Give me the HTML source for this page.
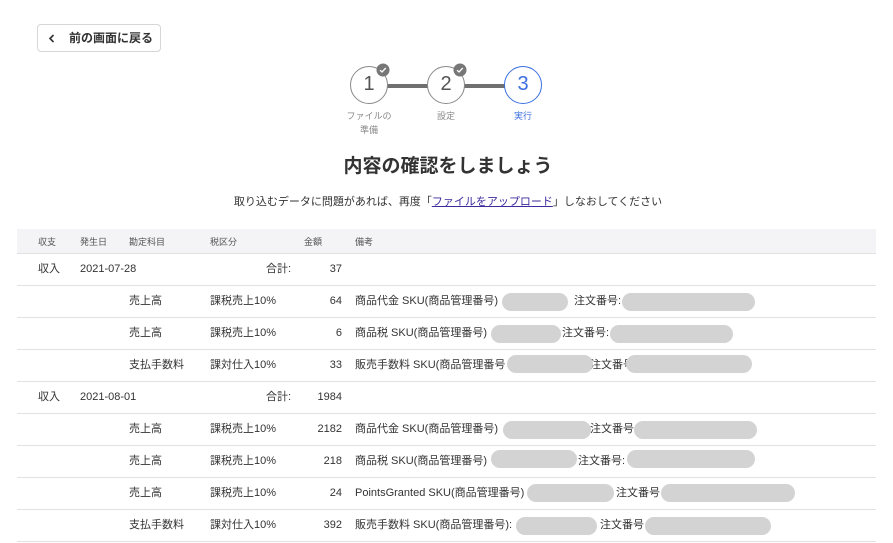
<!DOCTYPE html>
<html><head><meta charset="utf-8"><style>
*{margin:0;padding:0;box-sizing:border-box}
body{width:893px;height:543px;background:#fff;font-family:"Liberation Sans","Noto Sans CJK JP",sans-serif;color:#333;position:relative;overflow:hidden}
.a{position:absolute;white-space:nowrap}
.btn{left:37px;top:24px;width:124px;height:28px;border:1px solid #d6d6d6;border-radius:4px;font-size:12px;font-weight:bold;line-height:26px;padding-left:31px;color:#333}
.circ{position:absolute;width:38px;height:38px;border-radius:50%;border:1.5px solid #8a8a8a;background:#fff;font-size:20px;line-height:35px;text-align:center;color:#555;top:66px}
.lbl{position:absolute;font-size:9px;color:#888;text-align:center;line-height:14px;width:60px}
.t{font-size:11px;color:#333;line-height:14px}
.line{position:absolute;left:17px;width:859px;height:1px;background:#e2e2e2}
.pill{position:absolute;height:18px;border-radius:9px;background:#d3d3d4}
.r{text-align:right}
</style></head><body>
<div class="a btn">前の画面に戻る</div>
<svg class="a" style="left:48px;top:34px" width="8" height="9"><path d="M5.5 1 L2 4.5 L5.5 8" stroke="#333" stroke-width="1.6" fill="none"/></svg>

<div style="position:absolute;left:385px;top:84px;width:140px;height:4px;background:#707070"></div>
<div class="circ" style="left:350px">1</div>
<div class="circ" style="left:427px">2</div>
<div class="circ" style="left:504px;border-color:#3b6fe0;color:#3b6fe0">3</div>
<svg class="a" style="left:376px;top:63px" width="14" height="14"><circle cx="7" cy="7" r="6.5" fill="#777"/><path d="M4 7.2 L6 9 L9.8 5" stroke="#fff" stroke-width="1.3" fill="none"/></svg>
<svg class="a" style="left:453px;top:63px" width="14" height="14"><circle cx="7" cy="7" r="6.5" fill="#777"/><path d="M4 7.2 L6 9 L9.8 5" stroke="#fff" stroke-width="1.3" fill="none"/></svg>
<div class="lbl" style="left:339px;top:109px">ファイルの<br>準備</div>
<div class="lbl" style="left:416px;top:109px">設定</div>
<div class="lbl" style="left:493px;top:109px;color:#3b6fe0">実行</div>

<div class="a" style="left:0;width:893px;text-align:center;top:151px;font-size:19px;font-weight:bold;color:#333;padding-left:3px">内容の確認をしましょう</div>
<div class="a" style="left:0;width:893px;text-align:center;top:193px;font-size:11px;color:#333;padding-left:3px">取り込むデータに問題があれば、再度「<span style="color:#3d2a9e;text-decoration:underline">ファイルをアップロード</span>」しなおしてください</div>

<div style="position:absolute;left:17px;top:229px;width:859px;height:25px;background:#f4f3f5"></div>
<div class="a" style="top:235px;left:38px;font-size:9px;color:#555">収支</div>
<div class="a" style="top:235px;left:80px;font-size:9px;color:#555">発生日</div>
<div class="a" style="top:235px;left:129px;font-size:9px;color:#555">勘定科目</div>
<div class="a" style="top:235px;left:210px;font-size:9px;color:#555">税区分</div>
<div class="a" style="top:235px;left:304px;font-size:9px;color:#555">金額</div>
<div class="a" style="top:235px;left:355px;font-size:9px;color:#555">備考</div>
<div class="line" style="top:253px"></div>

<div class="line" style="top:285px"></div><div class="line" style="top:317px"></div><div class="line" style="top:349px"></div><div class="line" style="top:381px"></div><div class="line" style="top:413px"></div><div class="line" style="top:445px"></div><div class="line" style="top:477px"></div><div class="line" style="top:509px"></div><div class="line" style="top:541px"></div>

<div class="a t" style="top:262px;left:38px">収入</div>
<div class="a t" style="top:262px;left:80px">2021-07-28</div>
<div class="a t" style="top:262px;left:266px">合計:</div>
<div class="a t r" style="top:262px;left:300px;width:42px">37</div>

<div class="a t" style="top:294px;left:129px">売上高</div><div class="a t" style="top:294px;left:210px">課税売上10%</div><div class="a t r" style="top:294px;left:300px;width:42px">64</div>
<div class="a t" style="top:294px;left:355px">商品代金 SKU(商品管理番号)</div><div class="a t" style="top:294px;left:574px">注文番号:</div>
<div class="pill" style="top:293px;left:502px;width:66px"></div><div class="pill" style="top:293px;left:622px;width:133px"></div>

<div class="a t" style="top:326px;left:129px">売上高</div><div class="a t" style="top:326px;left:210px">課税売上10%</div><div class="a t r" style="top:326px;left:300px;width:42px">6</div>
<div class="a t" style="top:326px;left:355px">商品税 SKU(商品管理番号)</div><div class="a t" style="top:326px;left:562px">注文番号:</div>
<div class="pill" style="top:325px;left:491px;width:70px"></div><div class="pill" style="top:325px;left:610px;width:123px"></div>

<div class="a t" style="top:358px;left:129px">支払手数料</div><div class="a t" style="top:358px;left:210px">課対仕入10%</div><div class="a t r" style="top:358px;left:300px;width:42px">33</div>
<div class="a t" style="top:358px;left:355px">販売手数料 SKU(商品管理番号</div><div class="a t" style="top:358px;left:590px">注文番号</div>
<div class="pill" style="top:355px;left:507px;width:86px"></div><div class="pill" style="top:355px;left:626px;width:126px"></div>

<div class="a t" style="top:390px;left:38px">収入</div>
<div class="a t" style="top:390px;left:80px">2021-08-01</div>
<div class="a t" style="top:390px;left:266px">合計:</div>
<div class="a t r" style="top:390px;left:300px;width:42px">1984</div>

<div class="a t" style="top:422px;left:129px">売上高</div><div class="a t" style="top:422px;left:210px">課税売上10%</div><div class="a t r" style="top:422px;left:300px;width:42px">2182</div>
<div class="a t" style="top:422px;left:355px">商品代金 SKU(商品管理番号)</div><div class="a t" style="top:422px;left:590px">注文番号</div>
<div class="pill" style="top:421px;left:503px;width:88px"></div><div class="pill" style="top:421px;left:634px;width:123px"></div>

<div class="a t" style="top:454px;left:129px">売上高</div><div class="a t" style="top:454px;left:210px">課税売上10%</div><div class="a t r" style="top:454px;left:300px;width:42px">218</div>
<div class="a t" style="top:454px;left:355px">商品税 SKU(商品管理番号)</div><div class="a t" style="top:454px;left:578px">注文番号:</div>
<div class="pill" style="top:450px;left:491px;width:86px"></div><div class="pill" style="top:450px;left:627px;width:128px"></div>

<div class="a t" style="top:486px;left:129px">売上高</div><div class="a t" style="top:486px;left:210px">課税売上10%</div><div class="a t r" style="top:486px;left:300px;width:42px">24</div>
<div class="a t" style="top:486px;left:355px">PointsGranted SKU(商品管理番号)</div><div class="a t" style="top:486px;left:616px">注文番号</div>
<div class="pill" style="top:484px;left:527px;width:87px"></div><div class="pill" style="top:484px;left:661px;width:134px"></div>

<div class="a t" style="top:518px;left:129px">支払手数料</div><div class="a t" style="top:518px;left:210px">課対仕入10%</div><div class="a t r" style="top:518px;left:300px;width:42px">392</div>
<div class="a t" style="top:518px;left:355px">販売手数料 SKU(商品管理番号):</div><div class="a t" style="top:518px;left:600px">注文番号</div>
<div class="pill" style="top:517px;left:516px;width:81px"></div><div class="pill" style="top:517px;left:645px;width:126px"></div>
</body></html>
